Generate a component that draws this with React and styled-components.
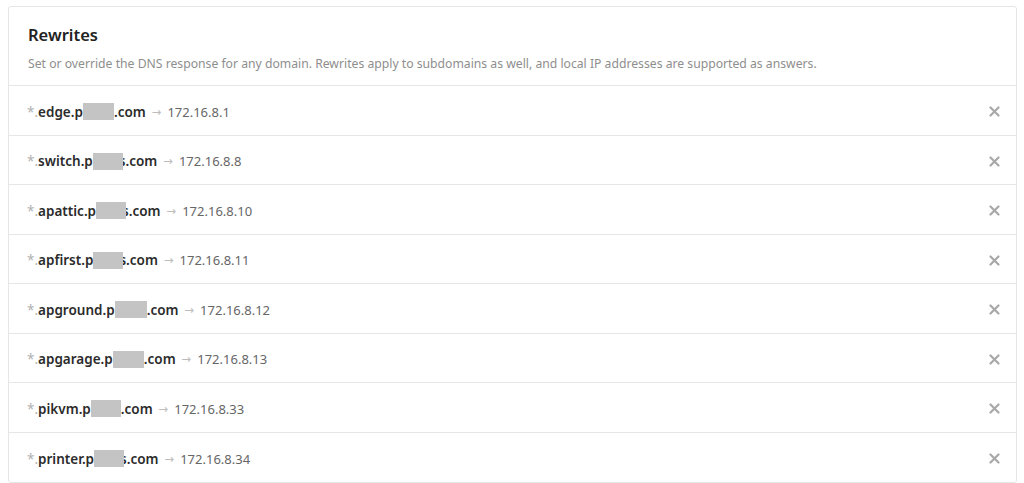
import React from "react";
import styled, { createGlobalStyle } from "styled-components";

const Global = createGlobalStyle`
  html, body { margin: 0; padding: 0; background: #fff; }
  body { font-family: "Noto Sans", "Open Sans", sans-serif; color: #333; }
`;

const Card = styled.section`
  margin: 6px 7px 0 8px;
  border: 1px solid #e6e6e6;
  border-radius: 3px;
  background: #fff;
`;

const Header = styled.header`
  padding: 16px 19px 0 19px;
  height: 79px;
  box-sizing: border-box;
  border-bottom: 1px solid #e6e6e6;
`;

const Title = styled.h2`
  margin: 0;
  font-size: 16.5px;
  line-height: 24px;
  font-weight: 600;
  color: #222;
`;

const Subtitle = styled.p`
  margin: 8px 0 0;
  font-size: 12.2px;
  line-height: 18px;
  color: #8e8e8e;
`;

const List = styled.ul`
  list-style: none;
  margin: 0;
  padding: 0;
`;

const Row = styled.li`
  display: flex;
  align-items: center;
  justify-content: space-between;
  height: 49.5px;
  box-sizing: border-box;
  padding: 3px 15px 0 18px;
  border-bottom: 1px solid #e6e6e6;
  &:last-child { border-bottom: none; }
`;

const Entry = styled.div`
  display: flex;
  align-items: center;
  font-size: 13.5px;
  white-space: pre;
`;

const Wild = styled.span`
  color: #b0b0b0;
  font-weight: 400;
`;

const Domain = styled.span`
  display: inline-flex;
  align-items: center;
  color: #2b2b2b;
  font-weight: 600;
`;

const Redact = styled.span`
  display: inline-block;
  width: ${(p) => p.$w}px;
  height: 17px;
  background: #c4c4c4;
  position: relative;
  z-index: 1;
  margin-right: ${(p) => (p.$overlap ? -4 : 0)}px;
`;

const Arrow = styled.span`
  font-family: "DejaVu Sans", sans-serif;
  color: #bcbcbc;
  margin: 0 6px 0 6px;
  font-size: 11.5px;
`;

const Ip = styled.span`
  color: #666;
  font-size: 13px;
`;

const Remove = styled.button`
  border: 0;
  background: none;
  padding: 0;
  width: 14px;
  height: 14px;
  display: flex;
  align-items: center;
  justify-content: center;
  cursor: pointer;
`;

const XIcon = () => (
  <svg width="11" height="11" viewBox="0 0 11 11">
    <path d="M1.5 1.5 L9.5 9.5 M9.5 1.5 L1.5 9.5" stroke="#a8a8a8" strokeWidth="2.2" strokeLinecap="round" />
  </svg>
);

const rows = [
  { name: "edge", w: 31, s: false, ip: "172.16.8.1" },
  { name: "switch", w: 30, s: true, ip: "172.16.8.8" },
  { name: "apattic", w: 30, s: true, ip: "172.16.8.10" },
  { name: "apfirst", w: 30, s: true, ip: "172.16.8.11" },
  { name: "apground", w: 32, s: false, ip: "172.16.8.12" },
  { name: "apgarage", w: 31, s: false, ip: "172.16.8.13" },
  { name: "pikvm", w: 30, s: false, ip: "172.16.8.33" },
  { name: "printer", w: 30, s: true, ip: "172.16.8.34" },
];

export default function App() {
  return (
    <>
      <Global />
      <Card>
        <Header>
          <Title>Rewrites</Title>
          <Subtitle>
            Set or override the DNS response for any domain. Rewrites apply to subdomains as well, and local IP
            addresses are supported as answers.
          </Subtitle>
        </Header>
        <List>
          {rows.map((r) => (
            <Row key={r.name}>
              <Entry>
                <Wild>*.</Wild>
                <Domain>
                  {r.name}.p
                  <Redact $w={r.w} $overlap={r.s} />
                  {r.s ? "s.com" : ".com"}
                </Domain>
                <Arrow>→</Arrow>
                <Ip>{r.ip}</Ip>
              </Entry>
              <Remove aria-label="Remove">
                <XIcon />
              </Remove>
            </Row>
          ))}
        </List>
      </Card>
    </>
  );
}
